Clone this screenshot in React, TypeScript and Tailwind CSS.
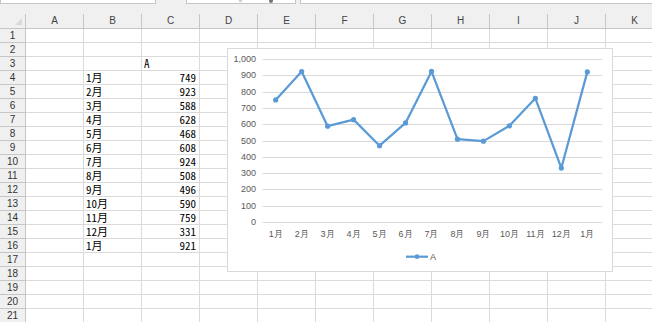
import React from 'react';

const cols = ['A', 'B', 'C', 'D', 'E', 'F', 'G', 'H', 'I', 'J', 'K'];
const months = ['1月', '2月', '3月', '4月', '5月', '6月', '7月', '8月', '9月', '10月', '11月', '12月', '1月'];
const values = [749, 923, 588, 628, 468, 608, 924, 508, 496, 590, 759, 331, 921];

const cellFont = { fontFamily: '"Noto Sans Mono CJK JP", "Noto Sans CJK JP", monospace' };

// what goes in a cell, keyed by row number then column index
function cellContent(row: number, col: number) {
  if (row === 3 && col === 2) return { text: 'A', align: 'left' };
  if (row >= 4 && row <= 16) {
    const i = row - 4;
    if (col === 1) return { text: months[i], align: 'left' };
    if (col === 2) return { text: String(values[i]), align: 'right' };
  }
  return null;
}

function Chart() {
  const x0 = 34.7;
  const cw = 25.97;
  const y = (v: number) => 173 - v * 0.163;
  const cx = (i: number) => x0 + cw / 2 + cw * i;
  const pts = values.map((v, i) => `${cx(i)},${y(v)}`).join(' ');
  const ticks = [1000, 900, 800, 700, 600, 500, 400, 300, 200, 100, 0];

  return (
    <div className="absolute left-[227px] top-[48px] w-[386px] h-[224px] border border-[#d9d9d9] bg-white">
      <svg width="384" height="222" style={{ fontFamily: '"Liberation Sans", Arial, sans-serif' }}>
        {ticks.map((t) => (
          <g key={t}>
            <line x1={x0} x2={374} y1={Math.round(y(t)) + 0.5} y2={Math.round(y(t)) + 0.5} stroke="#d9d9d9" strokeWidth="1" />
            <text x={28} y={y(t) + 3} textAnchor="end" fontSize="9" fill="#595959">
              {t.toLocaleString('en-US')}
            </text>
          </g>
        ))}
        {months.map((m, i) => (
          <text key={i} x={cx(i)} y={188} textAnchor="middle" fontSize="9" fill="#595959">
            {m}
          </text>
        ))}
        <polyline points={pts} fill="none" stroke="#5b9bd5" strokeWidth="2.25" strokeLinejoin="round" strokeLinecap="round" />
        {values.map((v, i) => (
          <circle key={i} cx={cx(i)} cy={y(v)} r="2.6" fill="#5b9bd5" />
        ))}
        {/* legend */}
        <line x1={178} x2={200} y1={207.7} y2={207.7} stroke="#5b9bd5" strokeWidth="2.25" />
        <circle cx={189} cy={207.7} r="2.4" fill="#5b9bd5" />
        <text x={202} y={211} fontSize="9" fill="#595959">A</text>
      </svg>
    </div>
  );
}

export default function App() {
  const rows = Array.from({ length: 21 }, (_, i) => i + 1);

  return (
    <div className="relative w-[652px] h-[322px] overflow-hidden bg-white" style={{ fontFamily: '"Liberation Sans", Arial, sans-serif' }}>
      {/* formula bar remnants */}
      <div className="flex h-[14px] bg-[#f0f0f0]">
        <div className="w-[156px] h-[4px] bg-white border border-t-0 border-[#c6c6c6]" />
        <div className="ml-[30px] w-[110px] h-[4px] bg-white border border-t-0 border-[#c6c6c6] relative">
          <span className="absolute left-[52px] top-0 w-[3px] h-[2px] bg-[#d0d0d0]" />
          <span className="absolute left-[82px] top-0 w-[4px] h-[3px] rounded-b bg-[#777]" />
        </div>
        <div className="ml-[4px] flex-1 h-[4px] bg-white border border-t-0 border-r-0 border-[#c6c6c6]" />
      </div>

      {/* column headers */}
      <div className="flex h-[15px] bg-[#f0f0f0] border-b border-[#c6c6c6] text-[10px] text-[#444]">
        <div className="w-[26px] shrink-0 border-r border-[#c6c6c6] relative">
          <span className="absolute right-[3px] bottom-[3px] w-0 h-0 border-l-[7px] border-l-transparent border-b-[7px] border-b-[#dadada]" />
        </div>
        {cols.map((c) => (
          <div key={c} className="w-[58px] shrink-0 border-r border-[#c6c6c6] flex items-center justify-center leading-none">
            {c}
          </div>
        ))}
      </div>

      {/* rows */}
      {rows.map((r) => (
        <div key={r} className="flex h-[14px]">
          <div className="w-[26px] shrink-0 bg-[#f0f0f0] border-r border-b border-[#c6c6c6] flex items-center justify-center text-[10px] leading-none text-[#333]">
            {r}
          </div>
          {cols.map((c, ci) => {
            const content = cellContent(r, ci);
            return (
              <div
                key={c}
                className={`w-[58px] shrink-0 border-r border-b border-[#dadada] flex items-center text-[11px] leading-[11px] text-black ${
                  content?.align === 'right' ? 'justify-end pr-[3px]' : 'pl-[2px]'
                }`}
                style={cellFont}
              >
                {content?.text}
              </div>
            );
          })}
        </div>
      ))}

      <Chart />
    </div>
  );
}
